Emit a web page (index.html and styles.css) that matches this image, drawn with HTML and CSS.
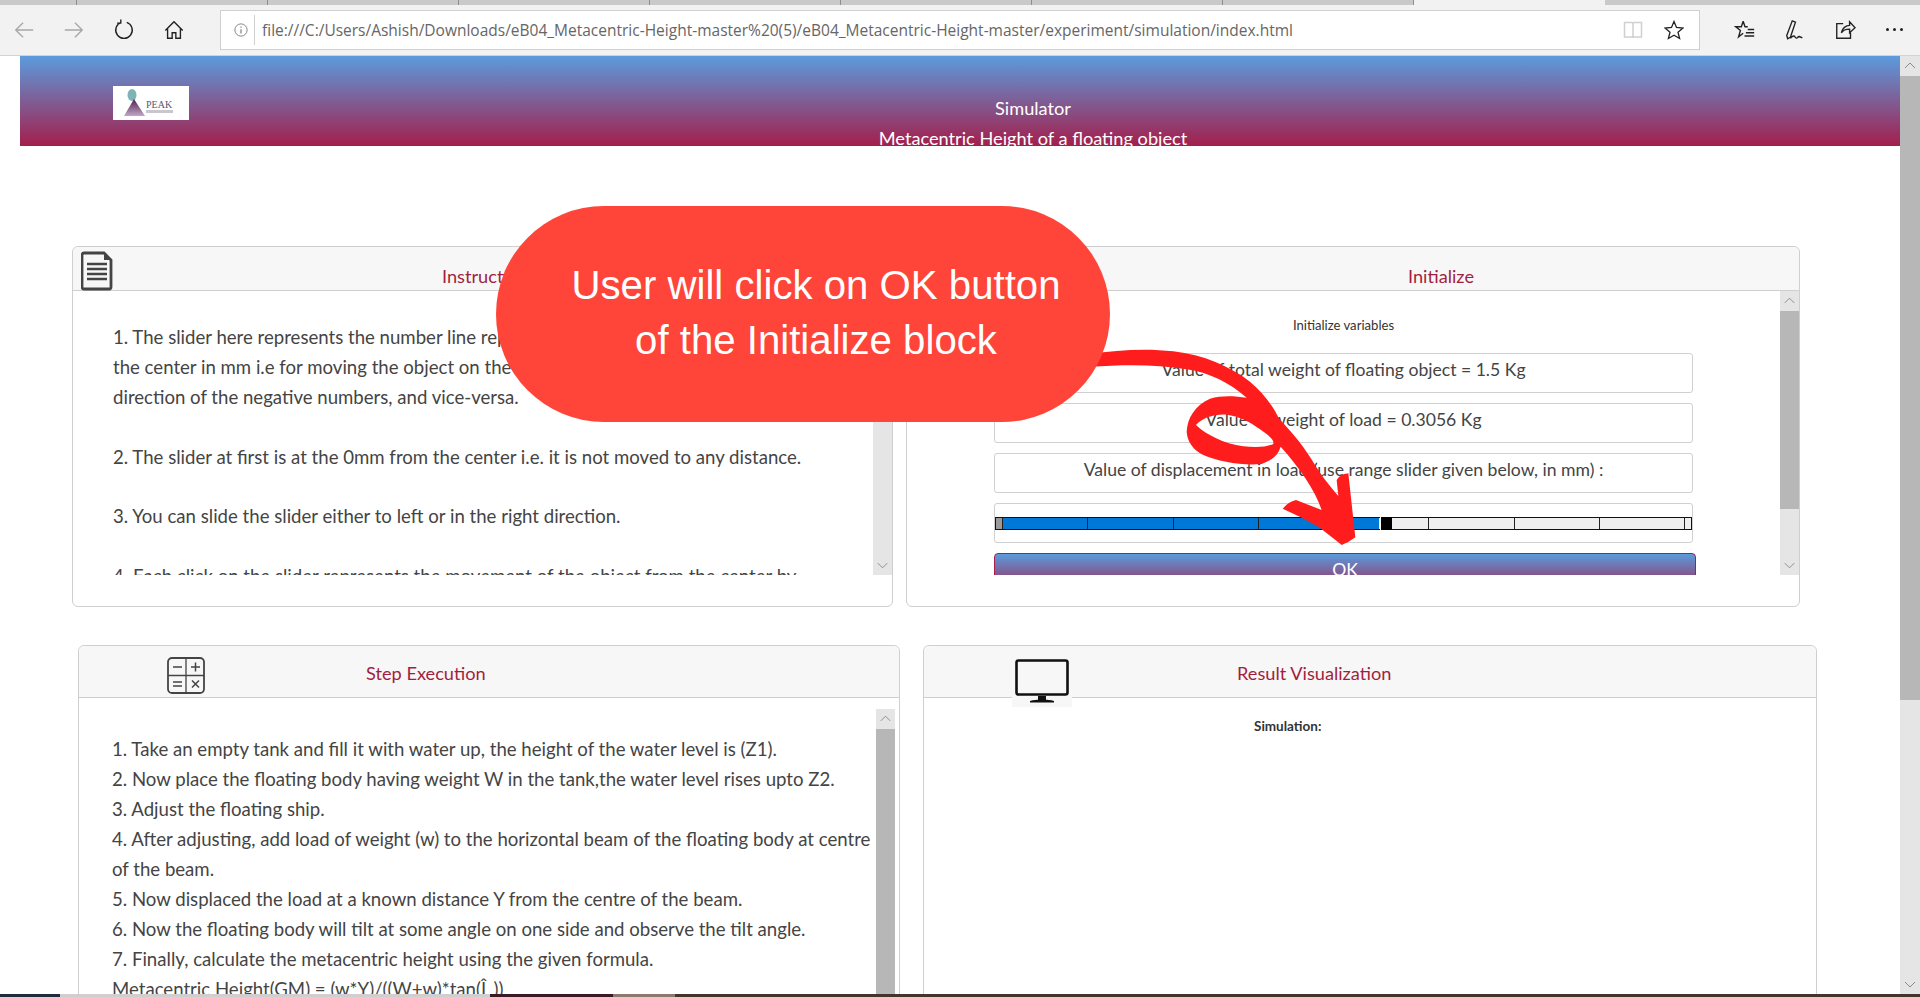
FILE: index.html
```html
<!DOCTYPE html>
<html lang="en">
<head>
  <meta charset="UTF-8">
  <title>Metacentric Height</title>
  <link rel="stylesheet" href="styles.css">
</head>
<body>

  <div class="tabstrip">
    <div class="tab"></div>
    <div class="tab"></div>
    <div class="tab"></div>
    <div class="tab"></div>
    <div class="tab"></div>
    <div class="tab"></div>
    <div class="tab"></div>
    <div class="tab"></div>
    <div class="tab tab-active"></div>
    <div class="tab tab-last"></div>
  </div>

  <div class="toolbar">
    <div class="nav-icons">
      <svg class="icon" viewBox="0 0 24 24"><path d="M22 12H3M11 4l-8 8 8 8" stroke="#a8a8a8"/></svg>
      <svg class="icon" viewBox="0 0 24 24"><path d="M2 12h19M13 4l8 8-8 8" stroke="#a8a8a8"/></svg>
      <svg class="icon" viewBox="0 0 24 24"><path d="M9 3.600a9 9 0 1 0 6 0M8.500 0.500v4h-4" stroke="#222"/></svg>
      <svg class="icon" viewBox="0 0 24 24"><path d="M2.500 12.500L12 3l9.500 9.500M5 10.500V21h5v-6h4v6h5V10.500" stroke="#222" stroke-width="1.700"/></svg>
    </div>
    <div class="address">
      <svg class="info" viewBox="0 0 16 16"><circle cx="8" cy="8" r="7" stroke="#777"/><path d="M8 7v5M8 4v1.500" stroke="#777" stroke-width="1.300"/></svg>
      <span class="url">file:///C:/Users/Ashish/Downloads/eB04_Metacentric-Height-master%20(5)/eB04_Metacentric-Height-master/experiment/simulation/index.html</span>
      <svg class="icon-sm" viewBox="0 0 20 20"><path d="M1.500 2.500h7.500a1 1 0 0 1 1 1V18a1 1 0 0 0-1-1H1.500zM18.500 2.500H11a1 1 0 0 0-1 1V18a1 1 0 0 1 1-1h7.500z" stroke="#d0d0d0" stroke-width="1.500"/></svg>
      <svg class="icon-sm star" viewBox="0 0 20 20"><path d="M10 1.500l2.500 6 6.500.5-5 4.200 1.600 6.300L10 15.200l-5.600 3.300L6 12.200 1 8l6.500-.5z" stroke="#222" stroke-width="1.300"/></svg>
    </div>
    <div class="tool-icons">
      <svg class="icon" viewBox="0 0 24 24"><path d="M10 2.500l2 6h3M10 2.500L8 8.500H2l5 4-2 7 5-4M15 11.500h7M13 15h9M11.500 18.500H22" stroke="#222" stroke-width="1.300"/></svg>
      <svg class="icon" viewBox="0 0 24 24"><path d="M9 2l3.500 1.500L7 20l-3 1.500L3 18zM7 21c3-3 4-3 5-1.500s2 2 3 .5 2-1 5 .5" stroke="#222" stroke-width="1.200"/></svg>
      <svg class="icon" viewBox="0 0 24 24"><path d="M10 5H3v16h15v-6M8 15c1-5 5-8 9-8V3l6 6.500L17 15v-4c-4 0-7 1-9 4z" stroke="#222" stroke-width="1.300"/></svg>
      <div class="dots"><i></i><i></i><i></i></div>
    </div>
  </div>

  <div class="page">
    <div class="content">
      <header class="site-header">
        <svg class="logo" viewBox="0 0 76 34">
          <defs>
            <linearGradient id="peak" x1="0" y1="0" x2="0" y2="1">
              <stop offset="0" stop-color="#4d1f55"/>
              <stop offset="1" stop-color="#c3a6c4"/>
            </linearGradient>
          </defs>
          <rect width="76" height="34" fill="#fff"/>
          <ellipse cx="19" cy="9" rx="4.500" ry="6" fill="#7fb3b5"/>
          <path d="M21 13l-10 17h21z" fill="url(#peak)"/>
          <text x="33" y="22" class="logo-text">PEAK</text>
          <rect x="33" y="24" width="27" height="3" fill="#c9c6d0"/>
        </svg>
        <div class="site-title">
          <div>Simulator</div>
          <div>Metacentric Height of a floating object</div>
        </div>
      </header>

      <div class="row row-top">
        <section class="card card-instr">
          <div class="card-head"><h3>Instructions</h3></div>
          <svg class="head-img img-doc" viewBox="0 0 32 40">
            <path d="M3 2h20l7 7v27a2 2 0 0 1-2 2H3a2 2 0 0 1-2-2V4a2 2 0 0 1 2-2z" fill="none" stroke="#444" stroke-width="2.800"/>
            <path d="M23 2v7h7z" fill="#444"/>
            <path d="M6 13h20M6 18h20M6 23h20M6 28h20" stroke="#444" stroke-width="2.400"/>
          </svg>
          <div class="scroll-area">
            <div class="scroll-text">
              <p>1. The slider here represents the number line representing the distance from<br>the center in mm i.e for moving the object on the left side, move the slider in the<br>direction of the negative numbers, and vice-versa.</p>
              <p>2. The slider at first is at the 0mm from the center i.e. it is not moved to any distance.</p>
              <p>3. You can slide the slider either to left or in the right direction.</p>
              <p>4. Each click on the slider represents the movement of the object from the center by</p>
            </div>
            <div class="scrollbar">
              <svg class="sb-arrow" viewBox="0 0 20 20"><path d="M5 12l5-5 5 5"/></svg>
              <div class="sb-track"><div class="sb-thumb"></div></div>
              <svg class="sb-arrow" viewBox="0 0 20 20"><path d="M5 8l5 5 5-5"/></svg>
            </div>
          </div>
        </section>

        <section class="card card-init">
          <div class="card-head"><h3>Initialize</h3></div>
          <div class="scroll-area">
            <div class="form-area">
              <div class="form-caption">Initialize variables</div>
              <div class="form-box">Value of total weight of floating object = 1.5 Kg</div>
              <div class="form-box">Value of weight of load = 0.3056 Kg</div>
              <div class="form-box">Value of displacement in load (use range slider given below, in mm) :</div>
              <div class="form-box slider-box">
                <div class="slider">
                  <div class="slider-ticks">
                    <i></i><i></i><i></i><i></i><i></i><i></i><i></i><i></i><i></i>
                  </div>
                  <div class="slider-thumb"></div>
                </div>
              </div>
              <button class="ok-btn">OK</button>
            </div>
            <div class="scrollbar">
              <svg class="sb-arrow" viewBox="0 0 20 20"><path d="M5 12l5-5 5 5"/></svg>
              <div class="sb-track"><div class="sb-thumb sb-thumb-init"></div></div>
              <svg class="sb-arrow" viewBox="0 0 20 20"><path d="M5 8l5 5 5-5"/></svg>
            </div>
          </div>
        </section>
      </div>

      <div class="row row-bottom">
        <section class="card card-step">
          <div class="card-head card-head-tall"><h3>Step Execution</h3></div>
          <svg class="head-img img-calc" viewBox="0 0 48 48">
            <rect x="6" y="7" width="36" height="35" rx="4" fill="none" stroke="#444" stroke-width="1.800"/>
            <path d="M24 7v35M6 24.500h36" stroke="#444" stroke-width="1.300"/>
            <path d="M11 16h9M29 16h9M33.500 11.500v9M11 31h9M11 35h9M30 29.500l7 7M37 29.500l-7 7" stroke="#444" stroke-width="1.500"/>
          </svg>
          <div class="step-body">
            <div class="step-text">
              1. Take an empty tank and fill it with water up, the height of the water level is (Z1).<br>
              2. Now place the floating body having weight W in the tank,the water level rises upto Z2.<br>
              3. Adjust the floating ship.<br>
              4. After adjusting, add load of weight (w) to the horizontal beam of the floating body at centre<br>
              of the beam.<br>
              5. Now displaced the load at a known distance Y from the centre of the beam.<br>
              6. Now the floating body will tilt at some angle on one side and observe the tilt angle.<br>
              7. Finally, calculate the metacentric height using the given formula.<br>
              Metacentric Height(GM) = (w*Y)/((W+w)*tan(Î¸))
            </div>
            <div class="scrollbar scrollbar-step">
              <svg class="sb-arrow" viewBox="0 0 20 20"><path d="M5 12l5-5 5 5"/></svg>
              <div class="sb-track"><div class="sb-thumb sb-thumb-step"></div></div>
            </div>
          </div>
        </section>

        <section class="card card-result">
          <div class="card-head card-head-tall"><h3>Result Visualization</h3></div>
          <svg class="head-img img-monitor" viewBox="0 0 60 52">
            <rect width="60" height="52" fill="#f7f7f7"/>
            <rect x="4.500" y="5.500" width="51" height="34" rx="2" fill="none" stroke="#111" stroke-width="2.600"/>
            <path d="M26 41h8v4h-8zM18 46c6-2 18-2 24 0v1.500H18z" fill="#111"/>
          </svg>
          <div class="sim-label">Simulation:</div>
        </section>
      </div>
    </div>

    <div class="page-scrollbar">
      <svg class="sb-arrow" viewBox="0 0 20 20"><path d="M5 12l5-5 5 5"/></svg>
      <div class="sb-track"><div class="sb-thumb sb-thumb-page"></div></div>
      <svg class="sb-arrow" viewBox="0 0 20 20"><path d="M5 8l5 5 5-5"/></svg>
    </div>

    <!-- red arrow, comes out from under the bubble -->
    <svg class="arrow" viewBox="0 0 1500 780">
      <path fill-rule="evenodd" d="M390 42 C 470 30 560 24 640 34 C 730 44 810 80 870 125 C 905 155 935 190 958 238 C 1000 280 1035 325 1065 375 C 1090 415 1115 445 1135 468 L 1130 420 Q 1140 402 1165 400 L 1186 592 Q 1165 608 1145 615 C 1120 595 1095 575 1075 560 C 1040 540 1005 522 968 506 Q 985 485 1008 480 L 1085 510 C 1065 450 1020 385 962 320 C 955 345 935 362 905 372 C 850 378 775 365 730 345 C 700 330 682 305 680 275 C 682 235 705 195 750 176 C 785 165 825 168 860 173 C 810 130 750 98 680 88 C 590 72 490 74 390 80 Z M708 255 C 740 285 790 310 850 319 C 885 323 920 322 940 312 C 943 300 925 285 900 268 C 870 245 835 228 800 224 C 760 222 725 235 708 255 Z"/>
    </svg>

    <div class="bubble">User will click on OK button<br>of the Initialize block</div>
  </div>

  <div class="taskbar">
    <i class="tb-a"></i><i class="tb-b"></i><i class="tb-c"></i><i class="tb-d"></i><i class="tb-e"></i>
  </div>

</body>
</html>
```

FILE: styles.css
```css
* {
  box-sizing: border-box;
}

html, body {
  margin: 0;
  height: 997px;
  overflow: hidden;
}

body {
  display: flex;
  flex-direction: column;
  font-family: Lato, "Open Sans", sans-serif;
  background: #fff;
  color: #444;
}

/* browser chrome */
.tabstrip {
  height: 5px;
  display: flex;
  background: #c9c9c9;
  flex-shrink: 0;
}

.tab {
  width: 191px;
  border-right: 1px solid #8f8f8f;
}

.tab:first-child {
  width: 77px;
}

.tab-active {
  background: #f2f2f2;
  border-right: 0;
}

.tab-last {
  flex: 1;
  border: 0;
}

.toolbar {
  height: 51px;
  flex-shrink: 0;
  background: #f2f2f2;
  border-bottom: 1px solid #d2d2d2;
  display: flex;
  align-items: center;
  padding-bottom: 1px;
}

.nav-icons {
  width: 220px;
  display: flex;
  padding-left: 13px;
  gap: 28px;
}

.icon, .icon-sm, .info, .sb-arrow {
  fill: none;
}

.icon {
  width: 22px;
  height: 22px;
  flex-shrink: 0;
}

.icon path {
  stroke-width: 1.500;
}

.address {
  width: 1480px;
  height: 40px;
  background: #fff;
  border: 1px solid #d0d0d0;
  display: flex;
  align-items: center;
  padding-left: 13px;
}

.info {
  width: 14px;
  height: 14px;
  flex-shrink: 0;
}

.url {
  flex: 1;
  margin-left: 6px;
  padding-left: 7px;
  border-left: 1px solid #d0d0d0;
  line-height: 30px;
  font-family: "Open Sans", sans-serif;
  font-size: 15.500px;
  color: #666;
  white-space: nowrap;
  overflow: hidden;
}

.icon-sm {
  width: 20px;
  height: 20px;
  flex-shrink: 0;
}

.star {
  margin-left: 21px;
  margin-right: 15px;
}

.tool-icons {
  flex: 1;
  display: flex;
  align-items: center;
  padding-left: 34px;
  gap: 28px;
}

.dots {
  display: flex;
  gap: 4px;
  margin-left: 2px;
}

.dots i {
  width: 3px;
  height: 3px;
  background: #222;
  border-radius: 50%;
}

/* page */
.page {
  position: relative;
  flex: 1;
  display: flex;
  overflow: hidden;
  min-height: 0;
}

.content {
  width: 1900px;
  flex-shrink: 0;
  overflow: hidden;
}

.site-header {
  height: 90px;
  margin-left: 20px;
  padding: 30px 23px 0 93px;
  display: flex;
  align-items: flex-start;
  overflow: hidden;
  background: linear-gradient(#5b9bdd, #a31f4c);
}

.logo {
  width: 76px;
  height: 34px;
  flex-shrink: 0;
}

.logo-text {
  font-family: "Liberation Serif", serif;
  font-size: 10px;
  fill: #5d5570;
}

.site-title {
  flex: 1;
  margin-top: 7px;
  text-align: center;
  color: #fff;
  font-size: 18.200px;
  line-height: 30px;
}

.row {
  display: flex;
  align-items: flex-start;
}

.row-top {
  margin-top: 100px;
  padding-left: 72px;
  gap: 13px;
}

.row-bottom {
  margin-top: 38px;
  padding-left: 78px;
  gap: 23px;
}

.card {
  position: relative;
  background: #fff;
  border: 1px solid #cfcfcf;
  border-radius: 6px;
}

.card-instr { width: 821px; height: 361px; }
.card-init { width: 894px; height: 361px; }
.card-step { width: 822px; height: 400px; }
.card-result { width: 894px; height: 400px; }

.card-head {
  height: 44px;
  background: #f7f7f7;
  border-bottom: 1px solid #cfcfcf;
  border-radius: 6px 6px 0 0;
  padding-top: 17px;
}

.card-head-tall {
  height: 52px;
  padding-top: 15px;
}

.card-head h3 {
  margin: 0;
  font-size: 18.200px;
  font-weight: 400;
  line-height: 24px;
  color: #a11f3e;
}

.card-instr h3 { padding-left: 369px; }
.card-init h3 { padding-left: 501px; }
.card-step h3 { padding-left: 287px; }
.card-result h3 { padding-left: 313px; }

.head-img {
  position: absolute;
}

.img-doc {
  left: 8px;
  top: 4px;
  width: 32px;
  height: 40px;
}

.img-calc {
  left: 83px;
  top: 5px;
  width: 48px;
  height: 48px;
}

.img-monitor {
  left: 88px;
  top: 9px;
  width: 60px;
  height: 52px;
}

.scroll-area {
  display: flex;
  height: 284px;
}

.scroll-text {
  flex: 1;
  padding: 31px 0 0 40px;
  overflow: hidden;
  font-size: 18.600px;
  line-height: 30px;
  white-space: nowrap;
}

.scroll-text p {
  margin: 0 0 29.500px;
}

.scrollbar, .page-scrollbar {
  width: 19px;
  flex-shrink: 0;
  display: flex;
  flex-direction: column;
  background: #e5e5e5;
}

.page-scrollbar {
  width: 20px;
}

.sb-arrow {
  width: 100%;
  height: 20px;
  flex-shrink: 0;
}

.sb-arrow path {
  stroke: #8a8a8a;
  stroke-width: 1;
}

.sb-track {
  flex: 1;
}

.sb-thumb {
  background: #b7b7b7;
  height: 100px;
}

.sb-thumb-init { height: 198px; }
.sb-thumb-step { height: 300px; }
.sb-thumb-page { height: 624px; }

.form-area {
  flex: 1;
  padding: 0 0 0 87px;
  overflow: hidden;
  display: flex;
  flex-direction: column;
  align-items: flex-start;
  gap: 10px;
}

.form-caption {
  width: 699px;
  height: 52px;
  padding-top: 25px;
  flex-shrink: 0;
  text-align: center;
  font-size: 13.100px;
  line-height: 18px;
  color: #333;
}

.form-box {
  width: 699px;
  height: 40px;
  flex-shrink: 0;
  padding-top: 1px;
  border: 1px solid #d0d0d0;
  border-radius: 3px;
  text-align: center;
  font-size: 17.600px;
  line-height: 30px;
}

.slider-box {
  padding-top: 13px;
}

.slider {
  position: relative;
  height: 13px;
  border: 1px solid #111;
  background: linear-gradient(90deg, #9a9a9a 6px, #0078d7 6px, #0078d7 55.100%, #efefef 55.100%);
}

.slider-ticks {
  height: 100%;
  padding: 0 6px;
  display: flex;
  justify-content: space-between;
}

.slider-ticks i {
  width: 1px;
  background: #222;
}

.slider-thumb {
  position: absolute;
  left: 384px;
  top: -1px;
  width: 12px;
  height: 13px;
  background: #000;
  border-left: 1px solid #fff;
}

.ok-btn {
  width: 702px;
  height: 40px;
  flex-shrink: 0;
  padding: 0 0 7px;
  border: 1px solid #a31f4c;
  border-radius: 4px;
  background: linear-gradient(#5b9bdd, #a31f4c);
  color: #fff;
  font-family: inherit;
  font-size: 17.600px;
  line-height: 24px;
}

.step-body {
  display: flex;
  padding-right: 4px;
  height: 340px;
}

.step-text {
  flex: 1;
  padding: 36px 0 0 33px;
  font-size: 18.600px;
  line-height: 30px;
  white-space: nowrap;
  overflow: hidden;
}

.scrollbar-step {
  margin-top: 11px;
}

.sim-label {
  margin-top: 19px;
  padding-left: 330px;
  font-size: 13.500px;
  font-weight: 700;
  line-height: 18px;
  color: #333;
}

/* overlays */
.bubble {
  position: absolute;
  left: 496px;
  top: 150px;
  width: 614px;
  height: 216px;
  padding: 0 0 2px 26px;
  display: flex;
  align-items: center;
  justify-content: center;
  text-align: center;
  background: #ff4539;
  border-radius: 108px;
  color: #fff;
  font-family: "Liberation Sans", sans-serif;
  font-size: 40.200px;
  line-height: 55px;
}

.arrow {
  position: absolute;
  left: 960px;
  top: 284px;
  width: 500px;
  height: 260px;
}

.arrow path {
  fill: #ff1c1c;
}

.taskbar {
  height: 3px;
  flex-shrink: 0;
  display: flex;
}

.taskbar i {
  display: block;
}

.tb-a { width: 60px; background: #1f2d3a; }
.tb-b { width: 430px; background: #cfcfcf; }
.tb-c { width: 123px; background: #3a1a24; }
.tb-d { width: 62px; background: #8a7a70; }
.tb-e { flex: 1; background: #43342c; }
```
